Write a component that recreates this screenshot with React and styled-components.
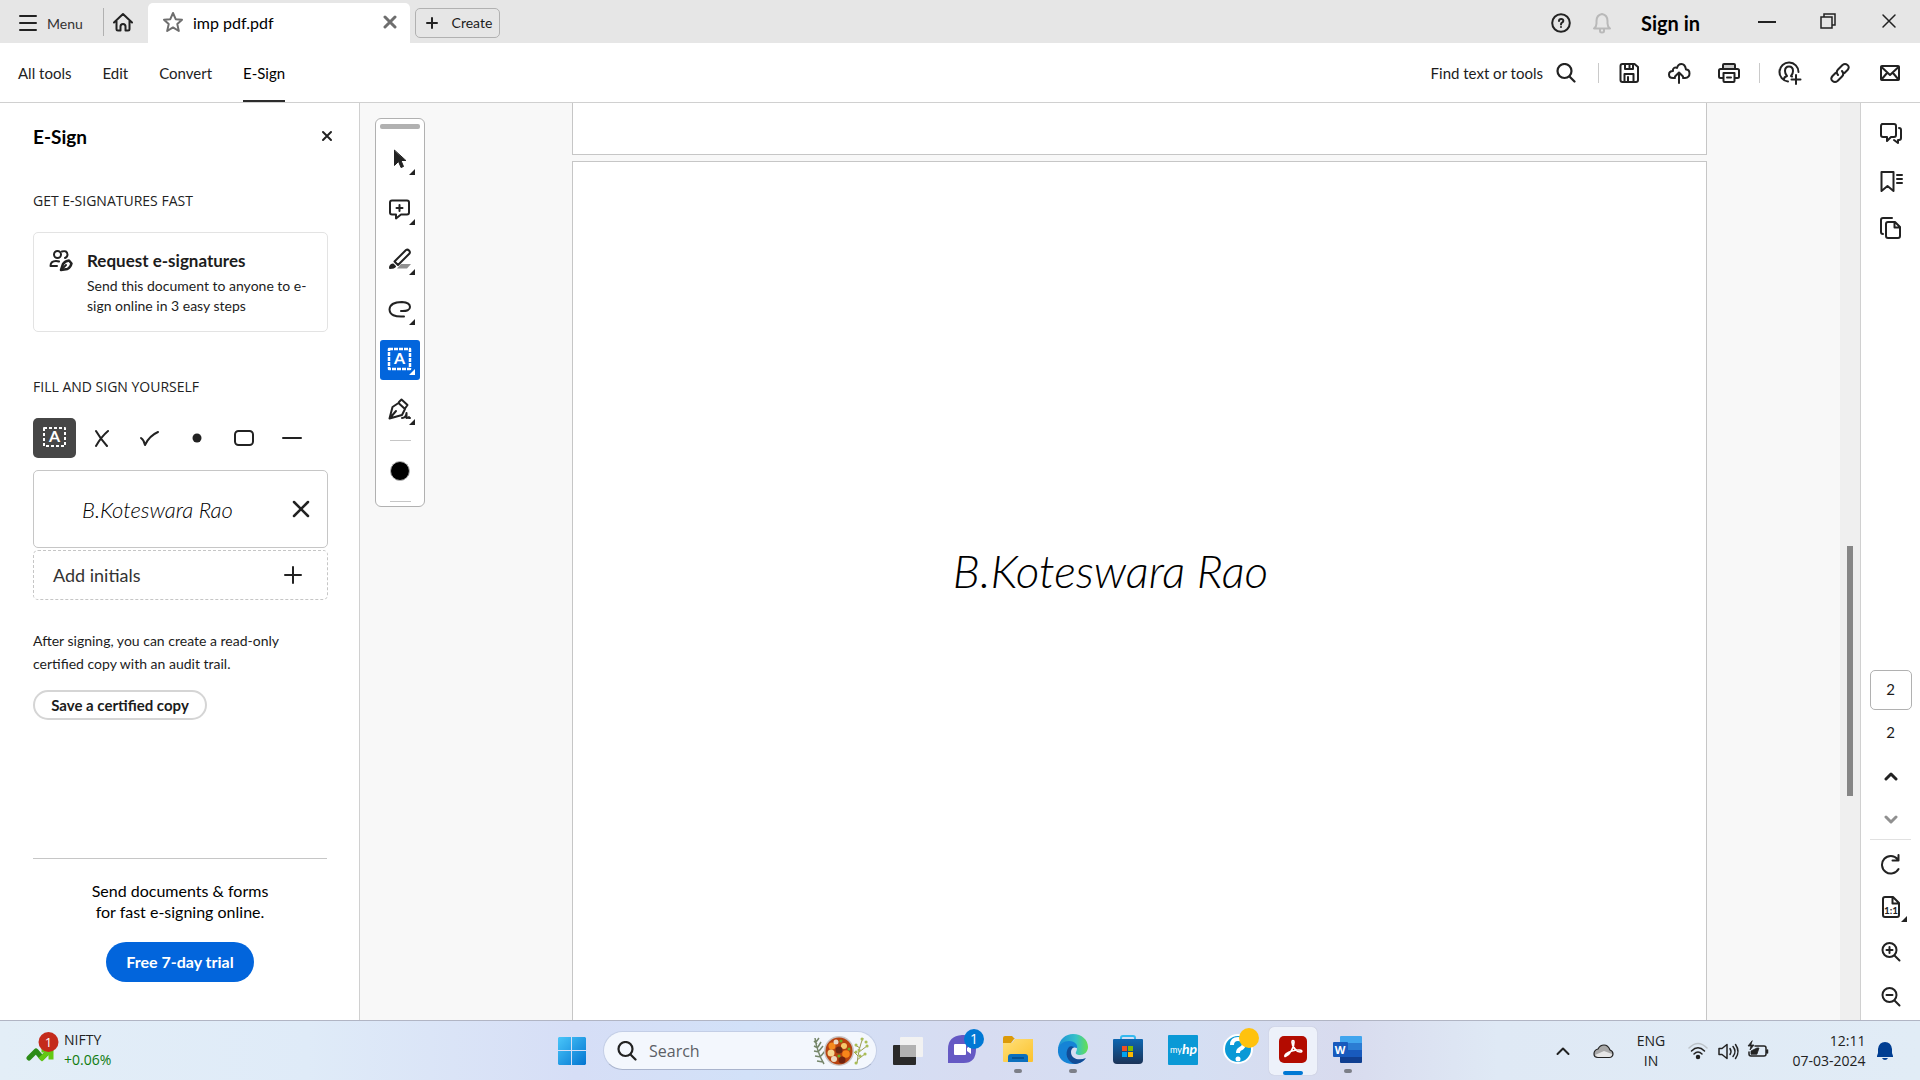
import React from "react";
import styled, { createGlobalStyle, css } from "styled-components";

const Global = createGlobalStyle`
  *, *::before, *::after { box-sizing: border-box; }
  body { margin: 0; overflow: hidden; }
  button, input { font: inherit; color: inherit; margin: 0; }
  h1, h2, h3, p { margin: 0; font-weight: 400; }
  svg { display: block; flex: none; }
`;

const ui = `Lato, "Liberation Sans", sans-serif`;
const system = `"Open Sans", "Noto Sans", sans-serif`;

const Window = styled.div`
  display: flex;
  flex-direction: column;
  height: 100vh;
  background: #fff;
  color: #1c1c1c;
  font-family: ${ui};
  font-size: 15px;
`;

const PlainButton = styled.button`
  display: flex;
  align-items: center;
  justify-content: center;
  padding: 0;
  border: 0;
  background: none;
  white-space: nowrap;
`;

/* Title bar */
const TitleBar = styled.header`
  display: flex;
  height: 43px;
  flex: none;
  background: #e6e6e6;
`;
const MenuButton = styled(PlainButton)`
  width: 103px;
  height: 28px;
  margin-top: 9px;
  padding-left: 19px;
  gap: 10px;
  justify-content: flex-start;
  font-size: 14px;
  color: #333;
`;
const HomeButton = styled(PlainButton)`
  width: 45px;
  height: 28px;
  margin-top: 8px;
  padding-right: 6px;
  border-left: 1px solid #b1b1b1;
`;
const Tab = styled.div`
  display: flex;
  align-items: center;
  width: 262px;
  margin-top: 3px;
  padding: 0 13px 2px 14px;
  gap: 9px;
  border-radius: 5px 5px 0 0;
  background: #fff;
  color: #000;
  font-size: 16px;
`;
const TabName = styled.span`
  flex: 1;
`;
const CreateButton = styled(PlainButton)`
  width: 85px;
  height: 30px;
  margin: 8px 0 0 5px;
  padding: 0 0 1px 2px;
  gap: 13px;
  border: 1px solid #b1b1b1;
  border-radius: 5px;
  font-size: 14px;
`;
const TitleRight = styled.div`
  display: flex;
  align-items: center;
  margin-left: auto;
  padding-top: 2px;
`;
const TitleIcon = styled(PlainButton)`
  width: 41px;
  height: 40px;
`;
const SignIn = styled(PlainButton)`
  width: 115px;
  height: 40px;
  padding-right: 18px;
  color: #000;
  font-size: 20px;
  font-weight: 700;
`;
const WindowButton = styled(PlainButton)`
  width: 61px;
  height: 40px;
  padding: 0 1px 4px 0;
`;

/* Toolbar */
const Toolbar = styled.div`
  display: flex;
  align-items: center;
  justify-content: space-between;
  height: 60px;
  flex: none;
  padding: 0 5px 0 18px;
  border-bottom: 1px solid #d0d0d0;
`;
const ModeNav = styled.nav`
  display: flex;
  align-self: stretch;
  gap: 31px;
`;
const ModeButton = styled(PlainButton)`
  height: 59px;
  border-top: 2px solid transparent;
  border-bottom: 2px solid ${(p) => (p.$active ? "#2c2c2c" : "transparent")};
  color: ${(p) => (p.$active ? "#000" : "#222")};
`;
const Actions = styled.div`
  display: flex;
  align-items: center;
`;
const FindButton = styled(PlainButton)`
  gap: 13px;
  margin-right: 17px;
`;
const ActionButton = styled(PlainButton)`
  width: 50px;
  height: 40px;
`;
const Separator = styled.span`
  width: 1px;
  height: 20px;
  margin: 0 5px;
  background: #cacaca;
`;

/* Side panel */
const Body = styled.div`
  display: flex;
  flex: 1;
  min-height: 0;
`;
const Panel = styled.aside`
  display: flex;
  flex-direction: column;
  width: 360px;
  flex: none;
  padding: 0 31px 38px 33px;
  border-right: 1px solid #d0d0d0;
`;
const PanelHead = styled.div`
  display: flex;
  align-items: center;
  justify-content: space-between;
  height: 66px;
`;
const PanelTitle = styled.h1`
  color: #000;
  font-size: 19px;
  font-weight: 700;
`;
const CloseButton = styled(PlainButton)`
  width: 24px;
  height: 24px;
  margin-right: -11px;
`;
const SectionLabel = styled.h2`
  margin-top: ${(p) => p.$top};
  color: #222;
  font-family: ${system};
  font-size: 14px;
  line-height: 20px;
`;
const RequestCard = styled.button`
  display: flex;
  align-items: flex-start;
  gap: 14px;
  height: 100px;
  margin-top: 21px;
  padding: 15px 14px 0 15px;
  border: 1px solid #e3e3e3;
  border-radius: 5px;
  background: #fff;
  text-align: left;
`;
const CardText = styled.span`
  display: flex;
  flex-direction: column;
  font-size: 14px;
  line-height: 20px;
`;
const CardTitle = styled.strong`
  margin-bottom: 2px;
  font-size: 17px;
  line-height: 26px;
  white-space: nowrap;
`;
const MarkRow = styled.div`
  display: flex;
  justify-content: space-between;
  width: 281px;
  margin-top: 21px;
`;
const MarkButton = styled(PlainButton)`
  width: 43px;
  height: 40px;
  border-radius: 5px;
  background: ${(p) => (p.$active ? "#464646" : "none")};
`;
const SignatureCard = styled.div`
  display: flex;
  align-items: center;
  justify-content: space-between;
  height: 78px;
  margin-top: 12px;
  padding: 0 14px 0 48px;
  border: 1px solid #c6c6c6;
  border-radius: 5px;
`;
const handwriting = css`
  font-family: Lato, sans-serif;
  font-style: italic;
  font-weight: 300;
  color: #000;
  white-space: nowrap;
`;
const SmallSignature = styled.span`
  ${handwriting}
  font-size: 22px;
`;
const InitialsButton = styled(PlainButton)`
  height: 50px;
  margin-top: 2px;
  padding: 0 25px 0 19px;
  justify-content: space-between;
  border: 1px dashed #c6c6c6;
  border-radius: 5px;
  color: #333;
  font-size: 18px;
`;
const Note = styled.p`
  margin-top: 29px;
  font-size: 14px;
  line-height: 23px;
`;
const OutlineButton = styled(PlainButton)`
  align-self: flex-start;
  width: 174px;
  height: 30px;
  margin-top: 15px;
  padding-bottom: 1px;
  border: 2px solid #d5d5d5;
  border-radius: 15px;
  font-size: 15px;
  font-weight: 700;
`;
const Promo = styled.div`
  display: flex;
  flex-direction: column;
  align-items: center;
  margin: auto 1px 0 0;
  padding-top: 21px;
  border-top: 1px solid #c6c6c6;
  color: #000;
  font-size: 16px;
  line-height: 21px;
  text-align: center;
`;
const TrialButton = styled(PlainButton)`
  width: 148px;
  height: 40px;
  margin-top: 20px;
  padding-bottom: 1px;
  border-radius: 20px;
  background: #0265dc;
  color: #fff;
  font-size: 16px;
  font-weight: 700;
`;

/* Document */
const Canvas = styled.main`
  display: flex;
  flex: 1;
  min-width: 0;
  background: #f8f8f8;
`;
const Palette = styled.div`
  display: flex;
  flex-direction: column;
  align-items: center;
  align-self: flex-start;
  width: 50px;
  height: 389px;
  flex: none;
  margin: 15px 0 0 15px;
  padding-top: 5px;
  border: 1px solid #b1b1b1;
  border-radius: 6px;
  background: #fff;
`;
const Grip = styled.span`
  width: 40px;
  height: 5px;
  border-radius: 2px;
  background: #b1b1b1;
`;
const PaletteTools = styled.div`
  display: flex;
  flex-direction: column;
  gap: 10px;
  padding: 11px 0 10px;
`;
const PaletteButton = styled(PlainButton)`
  width: 40px;
  height: 40px;
  border-radius: 3px;
  background: ${(p) => (p.$active ? "#0265dc" : "none")};
  color: ${(p) => (p.$active ? "#fff" : "#222")};
`;
const PaletteLine = styled.span`
  width: 21px;
  height: 1px;
  background: #c6c6c6;
`;
const ColorButton = styled(PlainButton)`
  width: 40px;
  height: 60px;
`;
const Pages = styled.div`
  display: flex;
  flex: 1;
  flex-direction: column;
  gap: 6px;
  min-width: 0;
  padding: 0 133px 0 147px;
`;
const FirstPage = styled.div`
  height: 52px;
  flex: none;
  border: 1px solid #c6c6c6;
  border-top: 0;
  background: #fff;
`;
const SecondPage = styled.div`
  flex: 1;
  padding: 380px 58px 0 0;
  border: 1px solid #c6c6c6;
  border-bottom: 0;
  background: #fff;
  text-align: center;
`;
const LargeSignature = styled.p`
  ${handwriting}
  font-size: 46px;
  line-height: 58px;
`;
const Track = styled.div`
  width: 20px;
  flex: none;
  padding: 443px 7px 0;
  background: #efefef;
`;
const Thumb = styled.div`
  width: 6px;
  height: 250px;
  background: #868686;
`;

/* Right rail */
const Rail = styled.aside`
  display: flex;
  flex-direction: column;
  justify-content: space-between;
  align-items: center;
  width: 60px;
  flex: none;
  padding: 7px 0 1px;
  border-left: 1px solid #d0d0d0;
  background: #fff;
`;
const RailGroup = styled.div`
  display: flex;
  flex-direction: column;
  align-items: center;
`;
const RailButton = styled(PlainButton)`
  width: 48px;
  height: ${(p) => p.$height};
`;
const PageInput = styled.input`
  width: 42px;
  height: 40px;
  padding: 0 0 3px;
  border: 1px solid #b1b1b1;
  border-radius: 5px;
  background: #fff;
  text-align: center;
`;
const PageTotal = styled.span`
  line-height: 44px;
`;
const RailLine = styled.span`
  width: 41px;
  height: 1px;
  background: #e1e1e1;
`;

/* Taskbar */
const Taskbar = styled.footer`
  display: grid;
  grid-template-columns: 1fr auto 1fr;
  align-items: center;
  height: 60px;
  flex: none;
  border-top: 1px solid #b1b5c4;
  background: linear-gradient(90deg, #e3eef7 0%, #dfebf8 16%, #d6def6 30%, #d2e1f8 39%, #d7dcf1 51%, #d5dff3 62%, #d8dbee 70%, #dfe9f5 78%, #e1ecf6 100%);
  color: #222;
  font-family: ${system};
  font-size: 14px;
  line-height: 20px;
`;
const Widget = styled(PlainButton)`
  justify-self: start;
  gap: 5px;
  padding: 0 0 2px 26px;
  text-align: left;
`;
const Change = styled.span`
  color: #0f7b0f;
`;
const Stack = styled.span`
  display: flex;
  flex-direction: column;
  text-align: ${(p) => p.$align};
`;
const Apps = styled.div`
  display: flex;
  align-items: center;
  gap: 7px;
`;
const AppButton = styled(PlainButton)`
  width: 48px;
  height: 48px;
  border-radius: 5px;
  background: ${(p) => (p.$active ? "#edf1fa" : "none")};
  box-shadow: ${(p) => (p.$active ? "0 0 1px #aab" : "none")};
`;
const SearchBox = styled.label`
  display: flex;
  align-items: center;
  gap: 12px;
  width: 274px;
  height: 39px;
  padding: 0 6px 0 13px;
  border: 1px solid #c3cee6;
  border-bottom-color: #a9b4cd;
  border-radius: 20px;
  background: #f3f7fd;
`;
const SearchInput = styled.input`
  flex: 1;
  min-width: 0;
  padding: 0;
  border: 0;
  outline: 0;
  background: none;
  font-size: 16px;
  &::placeholder { color: #5c5f66; opacity: 1; }
`;
const Tray = styled.div`
  display: flex;
  align-items: center;
  justify-self: end;
  padding: 0 21px 0 0;
`;
const TrayButton = styled(PlainButton)`
  width: ${(p) => p.$width};
  height: 44px;
`;
const ClockButton = styled(TrayButton)`
  padding-left: 10px;
`;

const Icon = ({ w = 24, h = w, sw = 2, color = "#222", children }) => (
  <svg width={w} height={h} viewBox={`0 0 ${w} ${h}`} fill="none" stroke={color} strokeWidth={sw} strokeLinecap="round" strokeLinejoin="round" aria-hidden="true">
    {children}
  </svg>
);

const PaletteIcon = ({ children }) => (
  <svg width="40" height="40" viewBox="0 0 40 40" fill="none" stroke="currentColor" strokeWidth="2" strokeLinecap="round" strokeLinejoin="round" aria-hidden="true">
    {children}
    <path d="M35 29v6h-6z" fill="currentColor" stroke="none" />
  </svg>
);

const appNames = ["File Explorer", "Edge", "Store", "myHP", "Help", "Acrobat", "Word"];

const appIcons = {
  "File Explorer": (
    <>
      <path d="M9 11q0-2 2-2h7l3 3h-1l-3 4H9z" fill="#dc9a08" />
      <path d="M9 16h9l3-4h18v22q0 1-1 1H10q-1 0-1-1z" fill="url(#folder)" />
      <path d="M14 35v-5q0-3 3-3h14q3 0 3 3v5z" fill="#0c70be" />
      <path d="M18 31h12" stroke="#064a86" strokeWidth="1.5" />
      <rect x="20" y="42" width="8" height="4" rx="2" fill="#7c7f88" />
    </>
  ),
  Edge: (
    <>
      <path d="M9 22C10 12 17 7 24 7c9 0 15 6 15 13 0 5-4 8-8 8-3 0-5-1-4-3 2-3 1-8-5-8-5 0-11 2-13 5z" fill="url(#edgeTop)" />
      <path d="M9 22c1-5 6-8 11-8 6 0 9 4 8 7-5-2-9 2-8 7 1 6 8 8 16 4-3 4-8 5-12 5C15 37 8 31 9 22z" fill="#1583d6" />
      <path d="M20 20c-5 6-2 15 6 17 5-.5 9-3 11-6-7 3-15 1-15-6 0-2 1-4 3-5-2-1-4-1-5 0z" fill="#124c96" />
      <rect x="20" y="42" width="8" height="4" rx="2" fill="#7c7f88" />
    </>
  ),
  Store: (
    <>
      <path d="M17 14v-3q0-2 2-2h10q2 0 2 2v3" stroke="#35b9ef" strokeWidth="2" fill="none" />
      <path d="M9 13q0-1 1-1h28q1 0 1 1v20q0 4-4 4H13q-4 0-4-4z" fill="url(#store)" />
      <path d="M18 19h5v5h-5z" fill="#f25022" /><path d="M24 19h5v5h-5z" fill="#7fba00" />
      <path d="M18 25h5v5h-5z" fill="#00a4ef" /><path d="M24 25h5v5h-5z" fill="#ffb900" />
    </>
  ),
  myHP: (
    <>
      <rect x="9" y="8" width="30" height="30" rx="1" fill="#0a99d6" />
      <text x="11" y="26" fill="#fff" fontSize="9" fontFamily="Lato, sans-serif">my</text>
      <text x="23" y="27" fill="#fff" fontSize="14" fontStyle="italic" fontWeight="700" fontFamily="Lato, sans-serif">hp</text>
    </>
  ),
  Help: (
    <>
      <circle cx="24" cy="22" r="14" fill="#0a99d6" stroke="#fff" strokeWidth="2" />
      <path d="M18 18q0-6 6-6t6 5q0 3-4 5-2 1-2 4" stroke="#fff" strokeWidth="4" fill="none" />
      <circle cx="24" cy="32" r="2.5" fill="#fff" />
      <circle cx="35" cy="11" r="10" fill="#ffc20e" />
    </>
  ),
  Acrobat: (
    <>
      <rect x="10" y="9" width="28" height="27" rx="5" fill="#b30b00" />
      <path d="M17 29c4-2 8-8 8-14 0-2-2-2-2 0 0 5 5 10 8 10 3 0 2-2-1-2-5 0-9 1-13 4-2 2-1 3 0 2z" stroke="#fff" strokeWidth="1.7" fill="none" />
      <rect x="14" y="44" width="20" height="4" rx="2" fill="#0078d4" />
    </>
  ),
  Word: (
    <>
      <path d="M16 10q0-1 1-1h20q1 0 1 1v6H16z" fill="#41a5ee" /><path d="M16 16h22v7H16z" fill="#2b7cd3" />
      <path d="M16 23h22v7H16z" fill="#185abd" /><path d="M16 30h22v5q0 1-1 1H17q-1 0-1-1z" fill="#103f91" />
      <rect x="9" y="15" width="15" height="15" rx="1" fill="#185abd" />
      <text x="16" y="27" fill="#fff" fontSize="11" fontWeight="700" textAnchor="middle" fontFamily="Open Sans, sans-serif">W</text>
      <rect x="20" y="42" width="8" height="4" rx="2" fill="#7c7f88" />
    </>
  ),
};

const Gradients = () => (
  <defs>
    <linearGradient id="folder" x1="0" y1="0" x2="1" y2="1"><stop stopColor="#ffe07a" /><stop offset="1" stopColor="#fcc22d" /></linearGradient>
    <linearGradient id="edgeTop"><stop stopColor="#1b8fd8" /><stop offset=".6" stopColor="#35c1c9" /><stop offset="1" stopColor="#66e04e" /></linearGradient>
    <linearGradient id="store" x1="0" y1="0" x2="0" y2="1"><stop stopColor="#0e67b2" /><stop offset="1" stopColor="#1b3357" /></linearGradient>
  </defs>
);

const TextBoxGlyph = ({ x, y, w, h, dash = "3 2", sw = 2 }) => (
  <>
    <rect x={x} y={y} width={w} height={h} strokeWidth={sw} strokeDasharray={dash} strokeLinecap="butt" />
    <text x={x + w / 2} y={y + h / 2 + 5} fill="currentColor" stroke="none" fontSize="16" fontWeight="700" textAnchor="middle" fontFamily="Lato, sans-serif">A</text>
  </>
);

const SearchGlyph = ({ w = 20, sw = 2 }) => (
  <Icon w={w} sw={sw}><circle cx="8.5" cy="8" r="7" /><path d="M13.5 13.5l5 5" /></Icon>
);

export default function App() {
  return (
    <Window>
      <Global />
      <TitleBar>
        <MenuButton><Icon w={18} h={16} sw={2}><path d="M1 1h16M1 8h16M1 15h16" /></Icon>Menu</MenuButton>
        <HomeButton aria-label="Home">
          <Icon w={20} h={20}><path d="M1 10.500L10 2l9 8.500M3.500 9v8q0 1.500 1.500 1.500h2.500v-4q0-2.500 2.500-2.500t2.500 2.500v4H15q1.500 0 1.500-1.500V9" /></Icon>
        </HomeButton>
        <Tab>
          <Icon w={22} color="#6e6e6e"><path d="M11 2l2.700 6.200 6.300.6-4.700 4.300 1.500 6.900-5.800-3.600L5.200 20l1.500-6.900L2 8.800l6.300-.6z" /></Icon>
          <TabName>imp pdf.pdf</TabName>
          <PlainButton aria-label="Close tab"><Icon w={14} color="#6e6e6e" sw={3}><path d="M2 2l10 10M12 2L2 12" /></Icon></PlainButton>
        </Tab>
        <CreateButton><Icon w={14}><path d="M7 2v10M2 7h10" /></Icon>Create</CreateButton>
        <TitleRight>
          <TitleIcon aria-label="Help">
            <Icon w={20}><circle cx="10" cy="10" r="8.800" /><path d="M8 8q0-2 2.200-2t2.100 1.800Q12.200 9 11 9.600q-1 .5-1 1.900M10 14v.1" /></Icon>
          </TitleIcon>
          <TitleIcon aria-label="Notifications">
            <Icon w={20} h={22} color="#b9b9b9"><path d="M2 16.500h16q-2.500-2-2.500-5V9q0-6-5.500-7-5.500 1-5.500 7v2.500q0 3-2.500 5zM8 17v2q0 1.500 2 1.500t2-1.500v-2" /></Icon>
          </TitleIcon>
          <SignIn>Sign in</SignIn>
          <WindowButton aria-label="Minimise"><Icon w={20}><path d="M2 11h16" strokeLinecap="square" /></Icon></WindowButton>
          <WindowButton aria-label="Restore"><Icon w={18} sw={1.500}><path d="M2 5h11v11H2zM5 5V2h11v11h-3" strokeLinejoin="miter" /></Icon></WindowButton>
          <WindowButton aria-label="Close"><Icon w={16} sw={1.500}><path d="M2 2l12 12M14 2L2 14" /></Icon></WindowButton>
        </TitleRight>
      </TitleBar>

      <Toolbar>
        <ModeNav>
          <ModeButton>All tools</ModeButton>
          <ModeButton>Edit</ModeButton>
          <ModeButton>Convert</ModeButton>
          <ModeButton $active>E-Sign</ModeButton>
        </ModeNav>
        <Actions>
          <FindButton>Find text or tools<SearchGlyph sw={2.200} /></FindButton>
          <Separator />
          <ActionButton aria-label="Save">
            <Icon w={22}><path d="M2.500 4q0-2 2-2h12l3.500 3v13q0 2-2 2H4.500q-2 0-2-2zM7 2v5h8V2M6.500 20v-8h9v8M10 15v5M11.500 3.500v2" /></Icon>
          </ActionButton>
          <ActionButton aria-label="Upload">
            <Icon w={24}><path d="M8 17H6q-4 0-4-3.500T6 10q-.5-2 1-3t3 0q1-4 4.500-4T19 8.500q3.500 0 3.500 4T18 17h-2M12 22V12M8 15.500l4-4 4 4" /></Icon>
          </ActionButton>
          <ActionButton aria-label="Print">
            <Icon w={24}><path d="M6 7V4q0-1 1-1h10q1 0 1 1v3" fill="#ccc" /><path d="M6 17H3.500Q2 17 2 15.500V9.500Q2 8 3.500 8h17Q22 8 22 9.500v6q0 1.500-1.500 1.500H18M6.500 12h11v8q0 1-1 1h-9q-1 0-1-1zM10 16.500h4" /></Icon>
          </ActionButton>
          <Separator />
          <ActionButton aria-label="Add people">
            <Icon w={24}><path d="M10 20.500A9.500 9.500 0 1 1 20.500 11M6 18q0-2 3-3-2-2-2-5 0-4.500 4-4.500t4 4.500q0 3-2 5l1 .5M18 14v9M13.500 18.500h9" /></Icon>
          </ActionButton>
          <ActionButton aria-label="Copy link">
            <Icon w={22}><path d="M9 13q-2.500-3 0-5.500l4.500-4.500q2.500-2 5 0t0 5l-3 3M13 9q2.500 3 0 5.500L8.500 19q-2.500 2-5 0t0-5l3-3" /></Icon>
          </ActionButton>
          <ActionButton aria-label="Email">
            <Icon w={22} h={20}><rect x="2" y="3" width="18" height="14" rx="1" /><path d="M2.500 4l8.500 8 8.500-8M2.500 16.500L8 10M19.500 16.500L14 10" /></Icon>
          </ActionButton>
        </Actions>
      </Toolbar>

      <Body>
        <Panel>
          <PanelHead>
            <PanelTitle>E-Sign</PanelTitle>
            <CloseButton aria-label="Close panel"><Icon w={12}><path d="M2 2l8 8M10 2l-8 8" /></Icon></CloseButton>
          </PanelHead>
          <SectionLabel $top="22px">GET E-SIGNATURES FAST</SectionLabel>
          <RequestCard>
            <Icon w={24}>
              <circle cx="8.500" cy="6.500" r="3.500" /><path d="M13 3.500q5-1.500 5.500 3 0 2.500-2.500 3.500M1.500 18q0-5 5.500-5 2 0 3 .500M1.500 18H8" />
              <path d="M12 22l2-6q2-3 6-3.500l2.500 3q-1 4-4 5.500z" strokeWidth="2.500" /><path d="M13 21l4-4" />
            </Icon>
            <CardText><CardTitle>Request e-signatures</CardTitle>Send this document to anyone to e-<br />sign online in 3 easy steps</CardText>
          </RequestCard>
          <SectionLabel $top="45px">FILL AND SIGN YOURSELF</SectionLabel>
          <MarkRow>
            <MarkButton $active aria-label="Text">
              <Icon w={24} color="#fff"><g color="#fff"><TextBoxGlyph x={1} y={2} w={21} h={18} /></g></Icon>
            </MarkButton>
            <MarkButton aria-label="Cross"><Icon w={18}><path d="M3 2q4 7 11 15M15 2Q8 8 3 17" /></Icon></MarkButton>
            <MarkButton aria-label="Tick"><Icon w={20}><path d="M1 10q3 2 4 7Q9 8 18 4" /></Icon></MarkButton>
            <MarkButton aria-label="Dot"><Icon w={12}><circle cx="6" cy="6" r="4.500" fill="#222" stroke="none" /></Icon></MarkButton>
            <MarkButton aria-label="Box"><Icon w={22}><rect x="1" y="4" width="18" height="14" rx="3.500" /></Icon></MarkButton>
            <MarkButton aria-label="Line"><Icon w={22}><path d="M2 11h18" /></Icon></MarkButton>
          </MarkRow>
          <SignatureCard>
            <SmallSignature>B.Koteswara Rao</SmallSignature>
            <PlainButton aria-label="Remove signature"><Icon w={24}><path d="M5 5l14 14M19 5L5 19" strokeWidth="2.500" /></Icon></PlainButton>
          </SignatureCard>
          <InitialsButton>Add initials<Icon w={18}><path d="M9 1v16M1 9h16" /></Icon></InitialsButton>
          <Note>After signing, you can create a read-only<br />certified copy with an audit trail.</Note>
          <OutlineButton>Save a certified copy</OutlineButton>
          <Promo>
            <p>Send documents &amp; forms<br />for fast e-signing online.</p>
            <TrialButton>Free 7-day trial</TrialButton>
          </Promo>
        </Panel>

        <Canvas>
          <Palette>
            <Grip />
            <PaletteTools>
              <PaletteButton aria-label="Select"><PaletteIcon><path d="M14.500 10.500v15l4-4 2.500 6 2.500-1-2.500-6h4.500z" fill="currentColor" strokeWidth="1" /></PaletteIcon></PaletteButton>
              <PaletteButton aria-label="Comment"><PaletteIcon><path d="M12 10.500h15q2 0 2 2v10q0 2-2 2h-6l-5 4v-4h-4q-2 0-2-2v-10q0-2 2-2zM19.500 15v6M16.500 18h6" /></PaletteIcon></PaletteButton>
              <PaletteButton aria-label="Highlight"><PaletteIcon><path d="M21 24h10l-4 4.500H17z" fill="#909090" stroke="none" /><path d="M14.500 21.500L26 10q1.500-1 3 .5t.5 3L18 25z" /><path d="M10 28q0-3 3-3.500l2 2q-1 1.500-5 1.500z" fill="currentColor" /></PaletteIcon></PaletteButton>
              <PaletteButton aria-label="Draw"><PaletteIcon><path d="M21 21q9 .5 9-4t-8-5q-12 0-12.500 7.500Q10 27.500 24 26.500" /></PaletteIcon></PaletteButton>
              <PaletteButton $active aria-label="Text"><PaletteIcon><TextBoxGlyph x={9} y={9} w={21} h={20} dash="4 1" sw={2.500} /></PaletteIcon></PaletteButton>
              <PaletteButton aria-label="Sign"><PaletteIcon><path d="M9.500 28.500l3-11.500 6-4 6.500 6-3 6zM10 28l6-7M19 12l2.500-2.500 6 5.500-2.500 3.500M22 28q4 0 4.500-5v5q1 0 2.500-1M29 28h1" /></PaletteIcon></PaletteButton>
            </PaletteTools>
            <PaletteLine />
            <ColorButton aria-label="Colour"><Icon w={22}><circle cx="11" cy="11" r="9.500" fill="#000" stroke="#b5b5b5" strokeWidth="1" /></Icon></ColorButton>
            <PaletteLine />
          </Palette>
          <Pages>
            <FirstPage />
            <SecondPage><LargeSignature>B.Koteswara Rao</LargeSignature></SecondPage>
          </Pages>
          <Track><Thumb /></Track>
        </Canvas>

        <Rail>
          <RailGroup>
            <RailButton $height="48px" aria-label="Comments">
              <Icon w={24}><path d="M3 2h12q2 0 2 2v9q0 2-2 2h-3l-4 4v-4H4q-2 0-2-2V4q0-1 1-2zM20 6q2 0 2 2v8q0 2-2 2h-1v3l-4-3" /></Icon>
            </RailButton>
            <RailButton $height="47px" aria-label="Bookmarks">
              <Icon w={24}><path d="M2.500 2h12v19l-6-5-6 5zM18 5h5M18 9h5M18 13h5" /></Icon>
            </RailButton>
            <RailButton $height="46px" aria-label="Pages">
              <Icon w={24}><path d="M4 18q-2 0-2-2V4q0-2 2-2h9M9 6h7l5 5v9q0 2-2 2H9q-2 0-2-2V8q0-2 2-2zM15.500 6.500v5h5" /></Icon>
            </RailButton>
          </RailGroup>
          <RailGroup>
            <PageInput aria-label="Page number" defaultValue="2" />
            <PageTotal>2</PageTotal>
            <RailButton $height="45px" aria-label="Previous page"><Icon w={14} sw={3}><path d="M2 9l5-5 5 5" /></Icon></RailButton>
            <RailButton $height="40px" aria-label="Next page"><Icon w={14} sw={3} color="#909090"><path d="M2 5l5 5 5-5" /></Icon></RailButton>
            <RailLine />
            <RailButton $height="48px" aria-label="Rotate"><Icon w={22}><path d="M18.500 16A8.800 8.800 0 1 1 17.500 6M18.500 2v5.500h-6" /></Icon></RailButton>
            <RailButton $height="40px" aria-label="Actual size">
              <Icon w={36} h={30}>
                <path d="M12 4h8l6 6v12q0 2-2 2H12q-2 0-2-2V6q0-2 2-2zM19.500 4.500v6h6" />
                <text x="18" y="21" fill="#222" stroke="none" fontSize="10" fontWeight="700" textAnchor="middle" fontFamily="Lato, sans-serif">1:1</text>
                <path d="M34 23v6h-6z" fill="#222" stroke="none" />
              </Icon>
            </RailButton>
            <RailButton $height="47px" aria-label="Zoom in"><Icon w={20}><circle cx="8.500" cy="8" r="7" /><path d="M13.500 13.500l5 5M8.500 5v6M5.500 8h6" /></Icon></RailButton>
            <RailButton $height="44px" aria-label="Zoom out"><Icon w={20}><circle cx="8.500" cy="8" r="7" /><path d="M13.500 13.500l5 5M5.500 8h6" /></Icon></RailButton>
          </RailGroup>
        </Rail>
      </Body>

      <Taskbar>
        <Widget>
          <Icon w={33} h={40} sw={5} color="none">
            <path d="M3 28l7-7 6 7 8-8" stroke="#2c8c17" /><path d="M16 28l8-8M18 20h7v7" stroke="#63c813" strokeLinecap="square" strokeLinejoin="miter" />
            <circle cx="22.500" cy="12" r="10" fill="#c42b1c" stroke="none" />
            <text x="22.500" y="17" fill="#fff" stroke="none" fontSize="13" textAnchor="middle" fontFamily="Open Sans, sans-serif">1</text>
          </Icon>
          <Stack $align="left"><span>NIFTY</span><Change>+0.06%</Change></Stack>
        </Widget>
        <Apps>
          <AppButton aria-label="Start">
            <svg width="30" height="30" viewBox="0 0 30 30" aria-hidden="true">
              <Gradients />
              <linearGradient id="start" gradientUnits="userSpaceOnUse" x1="0" y1="0" x2="30" y2="30"><stop stopColor="#4cc9fb" /><stop offset="1" stopColor="#0072cf" /></linearGradient>
              <path d="M2 1h12v13H1V2zM15 1h13l1 1v12H15zM1 15h13v14H2l-1-1zM15 15h14v13l-1 1H15z" fill="url(#start)" />
            </svg>
          </AppButton>
          <SearchBox>
            <SearchGlyph sw={2.200} />
            <SearchInput type="text" aria-label="Search" placeholder="Search" />
            <svg width="58" height="34" viewBox="0 0 58 34" aria-hidden="true">
              <path d="M3 4q2 14 9 26M5 10l-3-3M6 14l-4-2M7 18l-5-1M9 23l-6-1M11 28l-6-1M4 8l3-4M6 13l3-5M7 17l4-5M9 22l4-5" stroke="#75866a" strokeWidth="1.500" fill="none" />
              <circle cx="27" cy="17" r="15" fill="#c8c5c4" /><circle cx="27" cy="17" r="13.500" fill="#b8420f" />
              <circle cx="20" cy="12" r="3.500" fill="#f58a1e" /><circle cx="34" cy="20" r="3.800" fill="#f7861a" /><circle cx="19" cy="19" r="3.500" fill="#f6d78f" />
              <circle cx="32" cy="12" r="3" fill="#f4c96c" /><circle cx="27" cy="16" r="3.500" fill="#6b2a12" /><circle cx="30" cy="26" r="3.500" fill="#71240f" />
              <circle cx="24" cy="8" r="2.500" fill="#ead9c5" /><circle cx="22" cy="25" r="3" fill="#ecd8bd" /><circle cx="29" cy="7" r="1.600" fill="#6cab22" /><circle cx="27" cy="22" r="1.600" fill="#6cab22" /><circle cx="37" cy="15" r="1.500" fill="#6cab22" />
              <path d="M45 29q2-16 6-25M45 26l8-6M47 18l8-6M48 14l-5-3M46 22l-4-4" stroke="#9a9b51" fill="none" />
              <path d="M50 5h.1M44 11h.1M55 12h.1M53 20h.1M44 18h.1M47 16h.1M54 8h.1M44 29h.1M48 22h.1" stroke="#a9bd55" strokeWidth="3" strokeLinecap="round" />
            </svg>
          </SearchBox>
          <AppButton aria-label="Task view">
            <svg width="30" height="30" viewBox="0 0 30 30" aria-hidden="true"><rect y="9" width="23" height="20" rx="1" fill="#2a2a2a" /><rect x="7" y="1" width="23" height="20" rx="1" fill="#f2f2f2" /><path d="M7 9h16v12H8l-1-1z" fill="#b2b2b2" /></svg>
          </AppButton>
          <AppButton aria-label="Chat">
            <svg width="48" height="48" viewBox="0 0 48 48" aria-hidden="true">
              <path d="M9 36V22q0-13 14-14t14 14-14 14z" fill="#6559c4" /><rect x="15" y="17" width="12" height="11" rx="1" fill="#fff" /><path d="M28 21l4-3v9l-4-3z" fill="#fff" />
              <circle cx="35" cy="12" r="10" fill="#0078d4" /><text x="35" y="17" fill="#fff" fontSize="14" textAnchor="middle" fontFamily="Open Sans, sans-serif">1</text>
            </svg>
          </AppButton>
          {appNames.map((name) => (
            <AppButton key={name} $active={name === "Acrobat"} aria-label={name}>
              <svg width="48" height="48" viewBox="0 0 48 48" fill="none" aria-hidden="true">{appIcons[name]}</svg>
            </AppButton>
          ))}
        </Apps>
        <Tray>
          <TrayButton $width="40px" aria-label="Hidden icons"><Icon w={14} sw={2}><path d="M1.500 10L7 4.500l5.500 5.500" /></Icon></TrayButton>
          <TrayButton $width="40px" aria-label="OneDrive">
            <Icon w={22} h={18} sw={1.200}><path d="M2 12q0-4 4-5 2-4 6-4t6 5q3 1 3 4t-4 3.500H6Q2 15.500 2 12z" fill="#a8a8a8" /><path d="M3 13l9-4 8 3q0 3-3 3H6z" fill="#e6e6e6" stroke="none" /></Icon>
          </TrayButton>
          <TrayButton $width="56px" aria-label="Language"><Stack $align="center"><span>ENG</span><span>IN</span></Stack></TrayButton>
          <TrayButton $width="98px" aria-label="Network, sound and battery">
            <Icon w={90} h={22} sw={1.500}>
              <path d="M6 8q9-9 18 0" stroke="#bcc3c9" /><path d="M8.500 11q6.500-6.500 13 0M11 14q4-4 8 0" /><circle cx="15" cy="17" r="1.500" fill="#222" />
              <path d="M36 8.500h3l5-4v14l-5-4h-3zM47 8.500q2 3 0 6M50 6.500q4 5 0 10M52.500 4.500q5 7 0 14" />
              <path d="M72 6h9q2 0 2 2v6q0 2-2 2H68q-2 0-2-2v-2M84.500 10v3" /><path d="M68 14v-3l6-3h2l-2 6zM69 1l-4 5h3l-1 4 4-5h-3z" fill="#222" strokeWidth=".8" />
            </Icon>
          </TrayButton>
          <ClockButton $width="94px" aria-label="Clock"><Stack $align="right"><span>12:11</span><span>07-03-2024</span></Stack></ClockButton>
          <TrayButton $width="28px" aria-label="Notifications">
            <svg width="18" height="20" viewBox="0 0 18 20" aria-hidden="true"><path d="M1 16v-1l1-3V8q1-7 7-7t7 7v4l1 3v1zM6 17h6q-1 2-3 2t-3-2z" fill="#003e92" /></svg>
          </TrayButton>
        </Tray>
      </Taskbar>
    </Window>
  );
}
